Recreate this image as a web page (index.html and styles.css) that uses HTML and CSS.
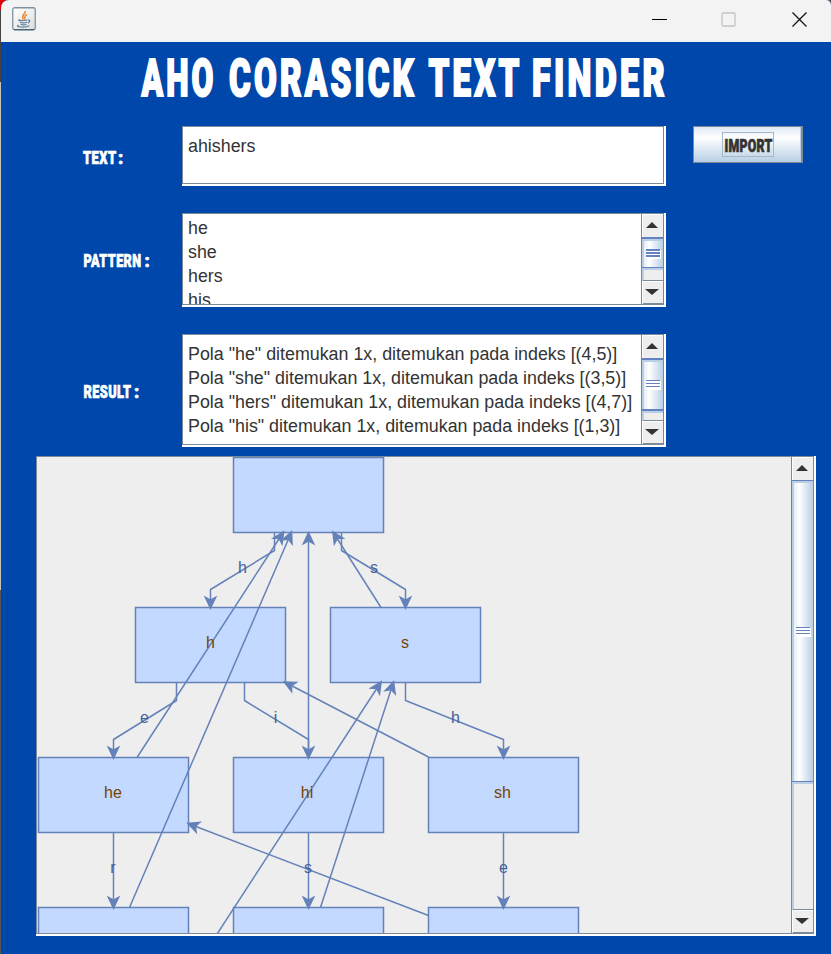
FILE: index.html
```html
<!DOCTYPE html>
<html lang="id">
<head>
<meta charset="utf-8">
<title>Aho Corasick Text Finder</title>
<link rel="stylesheet" href="styles.css">
</head>
<body>
<div class="window">
  <header class="titlebar">
    <svg class="java" viewBox="0 0 24 24" width="24" height="24">
      <defs><linearGradient id="jb" x1="0" y1="0" x2="1" y2="1"><stop offset="0" stop-color="#fff"/><stop offset="1" stop-color="#ddd"/></linearGradient></defs>
      <rect x=".75" y=".75" width="22.5" height="22" rx="2" fill="url(#jb)" stroke="#7d93a1" stroke-width="1.3"/>
      <path d="M2 22.7H22" stroke="#486474" stroke-width="1.2"/>
      <g fill="none" stroke="#e9862b" stroke-width="1.5"><path d="M13.2 4C14 7 9 7.500 11.200 12.500"/><path d="M15 7.500C11.500 9 14 10.500 12.300 12.500"/></g>
      <g fill="none" stroke="#5b7e9a" stroke-width="1.200"><path d="M8 12.500C4 14 10 14 15.500 13"/><path d="M8 15.200Q11 16.500 15 15.200M8.500 17.200Q11.500 18.500 14.500 17.200M16 12.800Q19.500 13 16 16.300M6.500 18C2 20 13 21 17.300 18.800"/></g>
    </svg>
    <svg class="controls" viewBox="0 0 170 42" width="170" height="42">
      <path d="M0 19.500H15" stroke="#000"/>
      <rect x="70" y="13" width="13" height="13" rx="1" fill="none" stroke="#c4c4c4" stroke-width="1.300"/>
      <path d="M140.500 12.500L154.500 26.500M154.500 12.500L140.500 26.500" stroke="#111" stroke-width="1.300"/>
    </svg>
  </header>
  <main>
    <svg class="title poster" viewBox="0 0 525 40" width="525" height="40">
      <text x=".5" y="38.500" textLength="75" lengthAdjust="spacingAndGlyphs">AHO</text>
      <text x="88" y="38.500" textLength="188" lengthAdjust="spacingAndGlyphs">CORASICK</text>
      <text x="287.500" y="38.500" textLength="94" lengthAdjust="spacingAndGlyphs">TEXT</text>
      <text x="391" y="38.500" textLength="136" lengthAdjust="spacingAndGlyphs">FINDER</text>
    </svg>

    <div class="row row-text">
      <svg class="label poster" viewBox="0 0 72 16" width="72" height="16"><text x="0" y="14" textLength="33.500" lengthAdjust="spacingAndGlyphs">TEXT</text><text x="35" y="14">:</text></svg>
      <div class="pane"><div class="inner"><p class="area">ahishers</p></div></div>
      <button class="import"><span class="focus"><svg class="poster" viewBox="0 0 50 23" width="50" height="23"><text x="1.500" y="19" textLength="48" lengthAdjust="spacingAndGlyphs">IMPORT</text></svg></span></button>
    </div>

    <div class="row row-pattern">
      <svg class="label poster" viewBox="0 0 72 16" width="72" height="16"><text x=".5" y="14" textLength="58" lengthAdjust="spacingAndGlyphs">PATTERN</text><text x="61.500" y="14">:</text></svg>
      <div class="pane"><div class="inner">
        <p class="area">he<br>she<br>hers<br>his</p>
        <div class="scroll"><i class="btn up"></i><i class="thumb"><b></b></i><i class="track"></i><i class="btn down"></i></div>
      </div></div>
    </div>

    <div class="row row-result">
      <svg class="label poster" viewBox="0 0 72 16" width="72" height="16"><text x=".5" y="14" textLength="48" lengthAdjust="spacingAndGlyphs">RESULT</text><text x="51" y="14">:</text></svg>
      <div class="pane"><div class="inner">
        <p class="area">Pola "he" ditemukan 1x, ditemukan pada indeks [(4,5)]<br>Pola "she" ditemukan 1x, ditemukan pada indeks [(3,5)]<br>Pola "hers" ditemukan 1x, ditemukan pada indeks [(4,7)]<br>Pola "his" ditemukan 1x, ditemukan pada indeks [(1,3)]</p>
        <div class="scroll"><i class="btn up"></i><i class="thumb"><b></b></i><i class="track"></i><i class="btn down"></i></div>
      </div></div>
    </div>

    <div class="pane graph"><div class="inner">
      <svg class="tree" viewBox="37 457 754 476" width="754" height="476">
        <defs><marker id="a" markerUnits="userSpaceOnUse" markerWidth="14" markerHeight="14" refX="11.500" refY="6" orient="auto" overflow="visible"><path class="head" d="M12 6L.5 .5L3.500 6L.5 11.500Z"/></marker></defs>
        <g class="nodes">
          <rect x="233.500" y="457.500" width="150" height="75"/>
          <rect x="135.500" y="607.500" width="150" height="75"/><rect x="330.500" y="607.500" width="150" height="75"/>
          <rect x="38.500" y="757.500" width="150" height="75"/><rect x="233.500" y="757.500" width="150" height="75"/><rect x="428.500" y="757.500" width="150" height="75"/>
          <rect x="38.500" y="907.500" width="150" height="75"/><rect x="233.500" y="907.500" width="150" height="75"/><rect x="428.500" y="907.500" width="150" height="75"/>
        </g>
        <g class="edges">
          <path d="M274.500 532.500V550.500L210.500 589.500V608"/>
          <path d="M341.500 532.500V550.500L405.500 589.500V608"/>
          <path d="M176.500 682.500V700.500L113.500 739.500V758"/>
          <path d="M244.500 682.500V700.500L308.500 739.500V758"/>
          <path d="M405.500 682.500V700.500L503.500 739.500V758"/>
          <path d="M113.500 832.500V908"/><path d="M308.500 832.500V908"/><path d="M503.500 832.500V908"/>
          <path d="M137 757.500L283.500 532"/><path d="M129.500 907.500L291.500 532"/>
          <path d="M308.500 757.500V533"/><path d="M381 607.500L333 532"/>
          <path d="M428.500 757L284.500 682"/><path d="M320.500 907.500L393.500 682"/>
          <path d="M428.500 915.500L188 823.500"/><path d="M185.500 982.500L381 682"/>
        </g>
        <g class="names"><text x="210.500" y="648">h</text><text x="405" y="648">s</text><text x="113" y="798">he</text><text x="307" y="798">hi</text><text x="502.500" y="798">sh</text></g>
        <g class="keys"><text x="242.500" y="573">h</text><text x="374" y="573">s</text><text x="144.500" y="723">e</text><text x="275.500" y="723">i</text><text x="455.500" y="723">h</text><text x="113" y="873">r</text><text x="308" y="873">s</text><text x="503.500" y="873">e</text></g>
      </svg>
      <div class="scroll"><i class="btn up"></i><i class="thumb"><b></b></i><i class="track"></i><i class="btn down"></i></div>
    </div></div>
  </main>
</div>
</body>
</html>
```
FILE: styles.css
```css
* { box-sizing: border-box; }
body {
  margin: 0;
  height: 954px;
  padding-left: 1px;
  overflow: hidden;
  background: linear-gradient(90deg, transparent 20px, #555 20px), linear-gradient(#d00 0 10px, #444 10px 82px, #c8c4b8 82px 590px, #555 590px);
  font-family: "Liberation Sans", Arial, sans-serif;
}
.window { height: 954px; background: #0047ab; border-radius: 8px 5px 0 0; overflow: hidden; }
.titlebar { height: 42px; background: #f3f3f3; display: flex; justify-content: space-between; padding: 0 9px 0 11px; }
.titlebar .java { margin-top: 7px; }
main { padding: 15px 0 0 35px; display: flex; flex-direction: column; }
svg { display: block; flex: none; }
.poster text {
  font-family: Roboto, "Liberation Sans", sans-serif;
  font-weight: 900;
  font-size: 17.500px;
  letter-spacing: .6px;
  fill: #fff;
  stroke: #fff;
  stroke-width: .7px;
}
.title { margin-left: 105px; overflow: visible; }
.title text { font-size: 51px; letter-spacing: 5px; stroke-width: 2px; }
.row { display: flex; align-items: flex-start; }
.label { margin: 0 27px 0 47px; overflow: visible; }
.pane { width: 484px; background: #fff; padding: 0 2px 2px 0; display: flex; flex: none; }
.inner { flex: 1; border: 1px solid #7a8a99; display: flex; overflow: hidden; }
.area { margin: 0; padding-left: 5px; flex: 1; font-size: 17.850px; line-height: 24px; color: #333; white-space: nowrap; }
.row-text { margin-top: 29px; }
.row-text .label { margin-top: 24px; }
.row-text .pane { height: 60px; }
.row-text .area { padding-top: 7px; }
.import {
  width: 110px; height: 37px; margin: 0 0 0 27px; padding: 0;
  border: solid #7a8a99; border-width: 1px 2px 1px 1px;
  box-shadow: inset -1px 0 #b8cfe5;
  background: linear-gradient(#dde8f3, #fff 30%, #b8cfe5);
  display: flex; align-items: center; justify-content: center;
}
.focus { border: 1px solid #a3b8cc; display: block; }
.import svg { overflow: visible; }
.import .poster text { fill: #333; stroke: #333; letter-spacing: .3px; }
.row-pattern { margin-top: 27px; }
.row-pattern .label { margin-top: 40px; }
.row-pattern .pane { height: 94px; }
.row-pattern .area { padding-top: 2px; height: 90px; }
.row-result { margin-top: 27px; }
.row-result .label { margin-top: 50px; }
.row-result .pane { height: 113px; }
.row-result .area { padding-top: 7px; }
.graph { width: 780px; height: 480px; margin-top: 9px; }
.graph .inner { background: #eee; }

.scroll { width: 22px; flex: none; border-left: 1px solid #7a8a99; background: #eee; display: flex; flex-direction: column; }
.scroll i { display: flex; justify-content: center; align-items: center; }
.btn { height: 23px; border: solid #fff; border-width: 1px 0 0 1px; }
.btn::before { content: ""; border: 6px solid transparent; }
.up::before { border-top: 0; border-bottom: 6px solid #333; margin-top: -3px; margin-right: 2px; }
.down { height: 24px; border-top: 1px solid #7a8a99; box-shadow: inset 0 1px #fff, inset 0 -1px #7a8a99; }
.down::before { border-width: 6px 7px 0; border-top-color: #333; margin: -2px 2px 0 0; }
.thumb {
  margin-left: -1px; border: solid #6382bf; border-width: 1px 0 1px 1px;
  box-shadow: inset 2px 2px #b8cfe5;
  background: linear-gradient(90deg, #dde8f3, #fff 35%, #b8cfe5);
}
.thumb b { width: 14px; height: 9px; margin-left: 1px; background: linear-gradient(#6382bf 1px, #fff 1px); background-size: 13px 3px; box-shadow: 1px 1px #fff; }
.track { flex: 1; box-shadow: inset 2px 2px #b8cfe5; }
.row-pattern .thumb { height: 31px; border-top-width: 2px; }
.row-pattern .thumb b { background: linear-gradient(#6382bf 2px, #fff 2px); background-size: 13px 3px; }
.row-result .thumb { height: 53px; border-top-width: 2px; border-bottom-width: 2px; }
.graph .thumb { height: 302px; }

.nodes rect { fill: #c3d9ff; stroke: #6482b9; stroke-width: 1.500; }
.edges path { fill: none; stroke: #6482b9; stroke-width: 1.500; stroke-linejoin: round; marker-end: url(#a); }
.head { fill: #6482b9; stroke: #6482b9; stroke-width: 1.200; }
.tree text { font-size: 16px; text-anchor: middle; }
.names { fill: #774400; }
.keys { fill: #446299; }
```
